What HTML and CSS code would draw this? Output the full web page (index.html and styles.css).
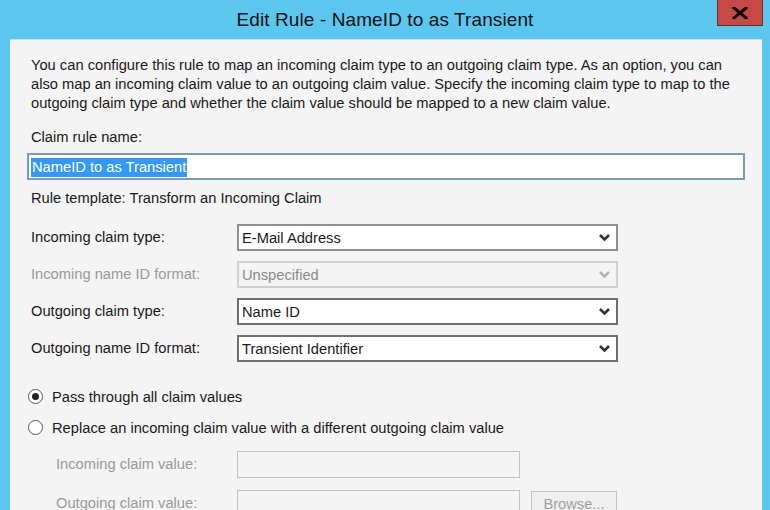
FILE: index.html
```html
<!DOCTYPE html>
<html>
<head>
<meta charset="utf-8">
<link rel="stylesheet" href="styles.css">
</head>
<body>
<div class="window">
  <div class="titlebar">
    <div class="title">Edit Rule - NameID to as Transient</div>
    <div class="close"><svg width="16" height="12" viewBox="0 0 16 12"><path d="M2 1 L14 11 M14 1 L2 11" stroke="#000" stroke-width="3" stroke-linecap="square"/></svg></div>
  </div>
  <div class="client">
    <p class="intro">You can configure this rule to map an incoming claim type to an outgoing claim type. As an option, you can<br>also map an incoming claim value to an outgoing claim value. Specify the incoming claim type to map to the<br>outgoing claim type and whether the claim value should be mapped to a new claim value.</p>
    <div class="lbl name-lbl">Claim rule name:</div>
    <div class="textbox name-box"><span class="sel">NameID to as Transient</span></div>
    <div class="lbl template">Rule template: Transform an Incoming Claim</div>
    <div class="grid">
      <div class="lbl">Incoming claim type:</div>
      <div class="combo"><span>E-Mail Address</span><svg class="chev" width="11" height="7" viewBox="0 0 11 7"><path d="M1 1 L5.5 5.5 L10 1" fill="none" stroke="#333" stroke-width="2.6"/></svg></div>
      <div class="lbl dis">Incoming name ID format:</div>
      <div class="combo disabled"><span>Unspecified</span><svg class="chev" width="11" height="7" viewBox="0 0 11 7"><path d="M1 1 L5.5 5.5 L10 1" fill="none" stroke="#b4b4b4" stroke-width="2.6"/></svg></div>
      <div class="lbl">Outgoing claim type:</div>
      <div class="combo dark"><span>Name ID</span><svg class="chev" width="11" height="7" viewBox="0 0 11 7"><path d="M1 1 L5.5 5.5 L10 1" fill="none" stroke="#333" stroke-width="2.6"/></svg></div>
      <div class="lbl">Outgoing name ID format:</div>
      <div class="combo dark"><span>Transient Identifier</span><svg class="chev" width="11" height="7" viewBox="0 0 11 7"><path d="M1 1 L5.5 5.5 L10 1" fill="none" stroke="#333" stroke-width="2.6"/></svg></div>
    </div>
    <div class="radio first"><span class="dot checked"></span><span>Pass through all claim values</span></div>
    <div class="radio second"><span class="dot"></span><span>Replace an incoming claim value with a different outgoing claim value</span></div>
    <div class="subgrid">
      <div class="lbl dis">Incoming claim value:</div>
      <div class="textbox plain"></div>
      <div></div>
      <div class="lbl dis">Outgoing claim value:</div>
      <div class="textbox plain"></div>
      <div class="button">Browse...</div>
    </div>
  </div>
</div>
</body>
</html>
```
FILE: styles.css
```css
html, body {
  margin: 0;
  padding: 0;
  overflow: hidden;
}
body {
  width: 770px;
  height: 510px;
  font-family: "Liberation Sans", Arial, sans-serif;
  font-size: 14.7px;
  color: #1a1a1a;
}
.window {
  width: 770px;
  height: 510px;
  background: #5bc7ef;
  display: flex;
  flex-direction: column;
  position: relative;
  overflow: hidden;
}
.titlebar {
  height: 39px;
  flex: none;
  display: flex;
  justify-content: center;
  align-items: center;
}
.title {
  font-family: "Liberation Sans", Arial, sans-serif;
  font-size: 19px;
  color: #111;
  padding-top: 1px;
  letter-spacing: 0.1px;
}
.close {
  position: absolute;
  left: 717px;
  top: -1px;
  width: 44px;
  height: 25px;
  background: #c64a43;
  border: 1px solid #6b2b27;
  display: flex;
  align-items: center;
  justify-content: center;
}
.client {
  flex: 1;
  margin: 0 8px 0 10px;
  background: #f4f4f4;
  border-top: 1px solid #c9dbe4;
  padding: 16px 0 0 21px;
}
.intro {
  margin: 0;
  line-height: 19px;
  white-space: nowrap;
}
.lbl {
  line-height: 19px;
  white-space: nowrap;
}
.dis {
  color: #9a9a9a;
}
.name-lbl {
  margin-top: 15px;
}
.textbox {
  box-sizing: border-box;
  height: 27px;
  background: #fff;
  border: 1px solid #abadb3;
}
.name-box {
  margin-top: 6px;
  margin-left: -4px;
  width: 718px;
  border: 2px solid #7b9ac0;
  padding: 2px 0 0 2px;
  display: flex;
  align-items: center;
}
.sel {
  background: #3399ff;
  color: #fff;
  line-height: 19px;
  padding: 0 1px;
}
.template {
  margin-top: 9px;
}
.grid {
  margin-top: 16px;
  display: grid;
  grid-template-columns: 206px 381px;
  grid-auto-rows: 27px;
  row-gap: 10px;
  align-items: center;
}
.combo {
  box-sizing: border-box;
  height: 27px;
  background: #fff;
  border: 2px solid #8f8f8f;
  display: flex;
  align-items: center;
  justify-content: space-between;
  padding: 0 6px 0 3px;
}
.combo.dark {
  border-color: #6f6f6f;
}
.combo.disabled {
  background: #f4f4f4;
  border-color: #d0d0d0;
  color: #8a8a8a;
}
.chev {
  display: block;
}
.radio {
  display: flex;
  align-items: center;
  height: 19px;
  gap: 9px;
  margin-left: -3px;
}
.radio.first {
  margin-top: 25px;
}
.radio.second {
  margin-top: 12px;
}
.dot {
  box-sizing: border-box;
  width: 15px;
  height: 15px;
  border-radius: 50%;
  border: 1px solid #555;
  background: #fff;
  display: flex;
  align-items: center;
  justify-content: center;
}
.dot.checked::after {
  content: "";
  width: 7px;
  height: 7px;
  border-radius: 50%;
  background: #222;
}
.subgrid {
  margin-top: 14px;
  margin-left: 25px;
  display: grid;
  grid-template-columns: 181px 283px 97px;
  grid-auto-rows: 27px;
  row-gap: 12px;
  align-items: center;
}
.textbox.plain {
  border-color: #c2c2c2;
  background: #f4f4f4;
}
.button {
  box-sizing: border-box;
  margin-left: 11px;
  width: 86px;
  height: 27px;
  border: 1px solid #c2c2c2;
  background: #f0f0f0;
  color: #a0a0a0;
  text-align: center;
  line-height: 25px;
  align-self: start;
  margin-top: 1px;
}
```
